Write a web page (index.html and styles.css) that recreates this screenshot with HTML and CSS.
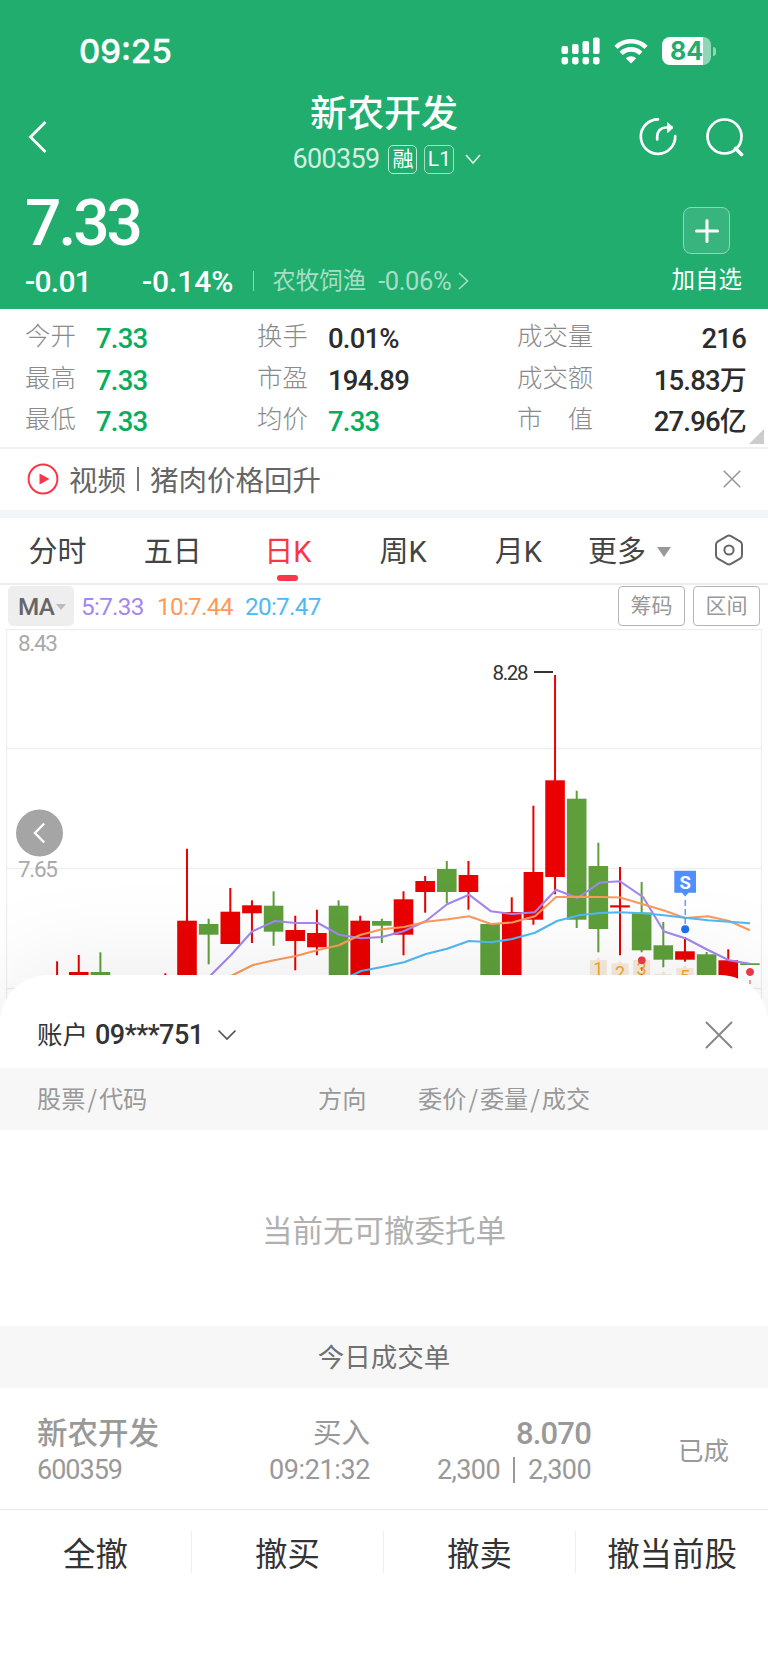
FILE: index.html
```html
<!DOCTYPE html>
<html lang="zh-CN">
<head>
    <meta charset="UTF-8">
    <meta name="viewport" content="width=device-width, initial-scale=1.0">
    <title>新农开发 600359</title>
    <link rel="stylesheet" href="styles.css">
</head>
<body>
    <header class="header">
        <div class="status-bar">
            <span class="time">09:25</span>
            <div class="status-icons">
                <svg width="40" height="28" viewBox="0 0 40 28" fill="#fff">
                    <rect x="0.5" y="9" width="6.6" height="8" rx="2"/>
                    <rect x="11" y="7" width="6.6" height="10" rx="2"/>
                    <rect x="21.5" y="4" width="6.6" height="13" rx="2"/>
                    <rect x="32" y="0.5" width="6.6" height="16.5" rx="2"/>
                    <rect x="0.5" y="20" width="6.6" height="7.5" rx="2.4"/>
                    <rect x="11" y="20" width="6.6" height="7.5" rx="2.4"/>
                    <rect x="21.5" y="20" width="6.6" height="7.5" rx="2.4"/>
                    <rect x="32" y="20" width="6.6" height="7.5" rx="2.4"/>
                </svg>
                <svg class="wifi" width="34" height="25" viewBox="0 0 34 25" fill="none" stroke="#fff" stroke-width="4.6">
                    <path d="M2 8.3a21.6 21.6 0 0 1 30 0"/>
                    <path d="M7.2 14.4a14 14 0 0 1 19.6 0"/>
                    <path d="M17 24.6l-5.2-5.3a7.4 7.4 0 0 1 10.4 0z" fill="#fff" stroke="none"/>
                </svg>
                <div class="battery"><span>84</span></div>
                <i class="battery-tip"></i>
            </div>
        </div>

        <div class="nav-bar">
            <svg class="back" width="20" height="34" viewBox="0 0 20 34" fill="none" stroke="#fff" stroke-width="2.8">
                <path d="M17.5 2L2.5 17l15 15"/>
            </svg>
            <div class="stock-title">
                <h1>新农开发</h1>
                <div class="stock-code">
                    <span class="code">600359</span>
                    <span class="tag">融</span>
                    <span class="tag tag-level">L1</span>
                    <svg width="16" height="11" viewBox="0 0 16 11" fill="none" stroke="#d3efe2" stroke-width="1.8">
                        <path d="M1 1l7 8 7-8"/>
                    </svg>
                </div>
            </div>
            <div class="nav-icons">
                <svg width="38" height="40" viewBox="0 0 38 40" fill="none" stroke="#fff" stroke-width="2.7" stroke-linecap="round">
                    <path d="M19 2.4A17.2 17.2 0 1 0 36.2 19"/>
                    <path d="M18.2 22.5v-3.5a8.5 8.5 0 0 1 8.5-8.5h6"/>
                    <path d="M29 6l5 4.6-5 4.6z" fill="#fff" stroke-width="1"/>
                </svg>
                <svg width="38" height="40" viewBox="0 0 38 40" fill="none" stroke="#fff" stroke-width="2.7">
                    <circle cx="18.5" cy="19.5" r="17"/>
                    <path d="M29.5 31.5l6 6" stroke-width="3.6" stroke-linecap="round"/>
                </svg>
            </div>
        </div>

        <div class="quote">
            <div>
                <div class="price">7.33</div>
                <div class="change">
                    <span class="change-value">-0.01</span>
                    <span class="change-rate">-0.14%</span>
                    <i class="divider"></i>
                    <span class="industry">农牧饲渔</span>
                    <span class="industry-rate">-0.06%</span>
                    <svg width="11" height="18" viewBox="0 0 11 18" fill="none" stroke="#a6dec5" stroke-width="1.6">
                        <path d="M1 1l8.5 8L1 17"/>
                    </svg>
                </div>
            </div>
            <div class="add-stock">
                <div class="add-box">
                    <svg width="24" height="24" viewBox="0 0 24 24" stroke="#fff" stroke-width="3" stroke-linecap="round">
                        <path d="M12 1.5v21M1.5 12h21"/>
                    </svg>
                </div>
                <span>加自选</span>
            </div>
        </div>
    </header>

    <section class="stats">
        <dl>
            <dt>今开</dt><dd class="down">7.33</dd>
            <dt>最高</dt><dd class="down">7.33</dd>
            <dt>最低</dt><dd class="down">7.33</dd>
        </dl>
        <dl>
            <dt>换手</dt><dd>0.01%</dd>
            <dt>市盈</dt><dd>194.89</dd>
            <dt>均价</dt><dd class="down">7.33</dd>
        </dl>
        <dl class="right">
            <dt>成交量</dt><dd>216</dd>
            <dt>成交额</dt><dd>15.83<b>万</b></dd>
            <dt>市　值</dt><dd>27.96<b>亿</b></dd>
        </dl>
        <i class="corner"></i>
    </section>

    <section class="notice">
        <svg width="32" height="32" viewBox="0 0 32 32">
            <circle cx="16" cy="16" r="14.4" fill="none" stroke="#fc3648" stroke-width="2"/>
            <path d="M12.5 10.5v11l10-5.5z" fill="#fc3648"/>
        </svg>
        <span class="notice-text">视频<i></i>猪肉价格回升</span>
        <svg width="18" height="18" viewBox="0 0 18 18" stroke="#999" stroke-width="1.6">
            <path d="M.7.7l16.6 16.6M17.3.7L.7 17.3"/>
        </svg>
    </section>

    <nav class="tabs">
        <span>分时</span>
        <span>五日</span>
        <span class="active">日K</span>
        <span>周K</span>
        <span>月K</span>
        <span class="more">更多<i class="triangle"></i></span>
        <svg width="30" height="32" viewBox="0 0 30 32" fill="none" stroke="#666" stroke-width="2">
            <path d="M13 2.1q2-1.1 4 0l9 5.2q2 1.2 2 3.4v10.6q0 2.2-2 3.4l-9 5.2q-2 1.1-4 0l-9-5.2q-2-1.2-2-3.4V10.7q0-2.2 2-3.4z"/>
            <circle cx="15" cy="16" r="4.6"/>
        </svg>
    </nav>

    <div class="indicators">
        <span class="ma-select">MA<i class="triangle"></i></span>
        <span class="ma5">5:7.33</span>
        <span class="ma10">10:7.44</span>
        <span class="ma20">20:7.47</span>
        <span class="btn-outline">筹码</span>
        <span class="btn-outline">区间</span>
    </div>

    <div class="chart">
        <svg width="768" height="400" viewBox="0 629 768 400">
            <g stroke="#eee" stroke-width="1.3" fill="none">
                <path d="M6.5 1029V629.5h755V1029M6.5 748.5h755M6.5 868.5h755M6.5 988.5h755"/>
            </g>
            <g id="signals"></g>
            <g id="candles"></g>
            <g fill="none" stroke-width="2.1" stroke-linejoin="round">
                <polyline stroke="#a387f0" points="205,982 212,974 231,955 252,931.5 275,921 295.5,923 318,923 339,934.7 361,938.3 382,937 403.5,931.3 426,921 447,904.3 469,894.7 491,911.3 512,914 534.7,912.3 556,889.7 577.5,898 600,882.5 620,881.3 643,897 664,931.5 686,938.5 707,949.5 729,960.3 750,963.7"/>
                <polyline stroke="#fb9a5b" points="215,984 235,974 253,965 274,960.3 296,956 318,950 339,945.3 360,935 382,929.3 404,927 426,921.7 448,919.3 469,916.3 491,924 512,922.5 535,916.3 556,897 577,896.7 600,897 620,897.5 643,904.3 664,910.5 685,918 708,916.3 729,921 750,930.3"/>
                <polyline stroke="#4fb9f5" points="345,978 355,974 361,971 382,967 404,962.3 426,954 447,948.7 469,941 491,942.3 512,939 535,932.7 557,921 579,915.3 600,913 620,912.3 643,913.3 664,915.3 685,917.7 708,920.3 729,921.7 750,923.3"/>
            </g>

            <!-- highest price -->
            <text class="peak" x="492.5" y="679.5" textLength="36">8.28</text>
            <path d="M534 672h19" stroke="#333" stroke-width="2"/>

            <!-- sell mark -->
            <path d="M674.3 870.8h21.7v22h-7.5l-3.3 3.7-3.3-3.7h-7.6z" fill="#4f8fff"/>
            <text class="sell" x="685.2" y="888.5">S</text>
            <path d="M685.2 900v25" stroke="#4f8fff" stroke-width="1.3" stroke-dasharray="6 3"/>
            <circle cx="685.2" cy="929.3" r="4" fill="#1f6ff5"/>

            <!-- buy marks -->
            <g fill="#f0384a" stroke="#f0384a">
                <circle cx="641.8" cy="960.3" r="3.5"/>
                <path d="M641.8 967v12" stroke-dasharray="4 3"/>
                <circle cx="750" cy="972" r="3.5"/>
                <path d="M750 980v8" stroke-dasharray="4 2"/>
            </g>

            <g class="axis">
                <text x="18" y="651" textLength="40">8.43</text>
                <text x="18" y="877" textLength="40">7.65</text>
            </g>
            <circle cx="39.5" cy="833" r="23.5" fill="#a5a5a5"/>
            <path d="M44.2 823.5l-9.2 9.5 9.2 9.5" fill="none" stroke="#fff" stroke-width="2.4"/>
        </svg>
    </div>

    <section class="sheet">
        <div class="account">
            <span class="account-name">账户</span>
            <span class="account-no">09***751</span>
            <svg class="arrow" width="20" height="12" viewBox="0 0 20 12" fill="none" stroke="#555" stroke-width="1.7">
                <path d="M1.5 1.5l8.5 8.5 8.5-8.5"/>
            </svg>
            <svg class="close" width="28" height="28" viewBox="0 0 28 28" stroke="#888" stroke-width="2" stroke-linecap="round">
                <path d="M1.5 1.5l25 25M26.5 1.5l-25 25"/>
            </svg>
        </div>
        <div class="table-head">
            <span>股票<i>/</i>代码</span>
            <span>方向</span>
            <span>委价<i>/</i>委量<i>/</i>成交</span>
        </div>
        <div class="empty">当前无可撤委托单</div>
        <div class="section-title">今日成交单</div>
        <div class="order">
            <div class="order-stock">
                <strong>新农开发</strong>
                <span>600359</span>
            </div>
            <div class="order-side">
                <strong>买入</strong>
                <span>09:21:32</span>
            </div>
            <div class="order-price">
                <strong>8.070</strong>
                <span>2,300<i></i>2,300</span>
            </div>
            <div class="order-state">已成</div>
        </div>
        <div class="actions">
            <button>全撤</button>
            <button>撤买</button>
            <button>撤卖</button>
            <button>撤当前股</button>
        </div>
    </section>

    <script>
        // [slot, up, high, body top, body bottom, low]
        const data = [
            [-6, 1, 961.3, 980, 985, 990],
            [-5, 1, 955, 972, 985, 990],
            [-4, 0, 952.3, 972, 985, 990],
            [-1, 1, 973.3, 980, 985, 990],
            [0, 1, 848.7, 920.7, 985, 985],
            [1, 0, 918.7, 924, 934.7, 964.3],
            [2, 1, 888, 911.7, 944, 944],
            [3, 1, 900.3, 905.3, 913.3, 943],
            [4, 0, 891.3, 905.7, 931.7, 945.7],
            [5, 1, 915.7, 930, 941, 970.3],
            [6, 1, 909.7, 933, 947.3, 955.3],
            [7, 0, 900.3, 905.7, 985, 985],
            [8, 1, 915.7, 920.7, 985, 985],
            [9, 0, 918.7, 921, 925.7, 943],
            [10, 1, 891.3, 899.3, 934.7, 955.3],
            [11, 1, 876, 881, 892, 912.7],
            [12, 0, 861, 869, 892, 903.3],
            [13, 1, 861, 875, 892, 909.7],
            [14, 0, 924, 924, 985, 985],
            [15, 1, 897.3, 912, 985, 985],
            [16, 1, 805.7, 872, 919.7, 924.7],
            [17, 1, 675, 780.3, 877, 894.3],
            [18, 0, 790.7, 798.7, 919.7, 928],
            [19, 0, 842.7, 866, 929, 952.3],
            [20, 1, 867, 905.3, 907.5, 955.3],
            [21, 0, 882, 912.5, 950.3, 952.3],
            [22, 0, 922, 945.3, 959.7, 967.3],
            [23, 1, 937.3, 951.3, 959.7, 961.7],
            [24, 0, 952, 954.3, 985, 985],
            [25, 1, 949.3, 960.3, 985, 985],
            [26, 0, 963.3, 963.3, 965, 965]
        ];
        const step = 21.65;
        const xOf = (i) => 187 + i * step;

        document.getElementById('candles').innerHTML = data.map(([i, up, high, top, bottom, low]) => {
            const color = up ? '#ea0000' : '#5e9f3b';
            return `<path d="M${xOf(i)} ${high}V${low}" stroke="${color}" stroke-width="2"/>
                <rect x="${xOf(i) - 9.8}" y="${top}" width="19.6" height="${bottom - top}" fill="${color}"/>`;
        }).join('');

        // sequence numbers under the candles: [slot, label, top]
        const signals = [[19, '1', 960], [20, '2', 963.5], [21, '3', 960], [22, '4', 974], [23, '5', 968]];
        document.getElementById('signals').innerHTML = signals.map(([i, label, top]) =>
            `<path d="M${xOf(i) - 8.5} ${top}h6l2.5-3 2.5 3h6v20h-17z" fill="#f8ecdf"/>
             <text class="signal" x="${xOf(i)}" y="${top + 15}">${label}</text>`).join('');
    </script>
</body>
</html>
```

FILE: styles.css
```css
* {
    box-sizing: border-box;
}

body {
    width: 768px;
    height: 1663px;
    margin: 0;
    overflow: hidden;
    background-color: #fff;
    color: #333;
    font-family: Roboto, "Noto Sans CJK SC", sans-serif;
}

i {
    font-style: normal;
}

svg {
    display: block;
    flex-shrink: 0;
}

/* header */
.header {
    height: 309px;
    background-color: #21ad6e;
    color: #fff;
}

.status-bar {
    height: 84px;
    padding: 18px 52px 0 79px;
    display: flex;
    justify-content: space-between;
    align-items: center;
}

.time {
    font-family: Inter, sans-serif;
    font-size: 33px;
    font-weight: 500;
    line-height: 40px;
    -webkit-text-stroke: 0.4px #fff;
}

.status-icons {
    display: flex;
    align-items: center;
}

.wifi {
    margin: 0 14px 0 13px;
}

.battery {
    width: 49px;
    height: 28px;
    border-radius: 8px;
    background: linear-gradient(90deg, #fff 84%, #90d6b6 84%);
    color: #21ad6e;
    font-family: Inter, sans-serif;
    font-size: 25px;
    font-weight: 700;
    line-height: 28px;
    text-align: center;
}

.battery-tip {
    width: 3px;
    height: 9px;
    margin-left: 2px;
    border-radius: 0 4px 4px 0;
    background-color: #90d6b6;
}

.nav-bar {
    height: 104px;
    padding: 0 24px 0 28px;
    display: grid;
    grid-template-columns: 150px 1fr 150px;
}

.back {
    margin-top: 36px;
}

.stock-title {
    margin-right: 4px;
    text-align: center;
}

h1 {
    margin: 4px 0 0;
    font-size: 37px;
    font-weight: 500;
    line-height: 54px;
}

.stock-code {
    height: 34px;
    padding-left: 6px;
    display: flex;
    justify-content: center;
    align-items: center;
}

.code {
    color: #d3efe2;
    font-size: 27px;
    letter-spacing: -0.7px;
    margin-right: 9px;
}

.tag {
    width: 29px;
    height: 29px;
    margin-right: 7px;
    border: 1.5px solid #c0e8d6;
    border-radius: 5px;
    font-size: 21px;
    line-height: 26px;
    text-align: center;
}

.tag-level {
    width: 30px;
    margin-right: 11px;
    border: 1px solid #a6dec5;
}

.nav-icons {
    padding-top: 33px;
    display: flex;
    justify-content: flex-end;
    gap: 29px;
}

.quote {
    padding: 0 26px 0 25px;
    display: flex;
    justify-content: space-between;
}

.price {
    height: 72px;
    font-size: 64px;
    font-weight: 500;
    line-height: 72px;
    letter-spacing: -3px;
}

.change {
    height: 42px;
    display: flex;
    align-items: center;
    font-size: 30px;
    font-weight: 500;
    letter-spacing: -0.1px;
}

.change-value {
    width: 117px;
    letter-spacing: -0.7px;
}

.divider {
    width: 1px;
    height: 20px;
    margin: 0 18px 0 20px;
    background-color: #90d6b6;
}

.industry {
    color: #a6dec5;
    font-size: 23.5px;
    font-weight: 400;
    letter-spacing: 0;
    line-height: 38px;
    margin-top: -1px;
}

.industry-rate {
    margin: 0 7px 0 12px;
    color: #a6dec5;
    font-size: 25.5px;
    font-weight: 400;
    letter-spacing: -0.4px;
}

.add-stock {
    padding-top: 19px;
    text-align: center;
    font-size: 23.5px;
}

.add-box {
    width: 47px;
    height: 47px;
    margin: 0 auto 8px;
    border: 1px solid #90d6b6;
    border-radius: 8px;
    background-color: #38b57f;
    display: flex;
    justify-content: center;
    align-items: center;
}

.add-stock span {
    display: block;
    line-height: 37px;
}

/* stats */
.stats {
    position: relative;
    height: 140px;
    padding: 8px 22px 0 25px;
    border-bottom: 2px solid #f0f0f0;
    display: grid;
    grid-template-columns: 232px 260px 1fr;
}

.stats dl {
    margin: 0;
    display: grid;
    grid-template-columns: 71px 1fr;
    grid-auto-rows: 41.5px;
    line-height: 43px;
}

.stats .right {
    grid-template-columns: 90px 1fr;
}

.stats dt {
    color: #8a8a8a;
    font-size: 25.4px;
    font-weight: 300;
    line-height: 39px;
    white-space: nowrap;
}

.stats dd {
    margin: 0;
    color: #2c2c2c;
    font-size: 27.5px;
    font-weight: 500;
    letter-spacing: -0.8px;
}

.stats dd b {
    font-size: 27px;
    font-weight: 500;
}

.stats .right dd {
    text-align: right;
}

.stats .down {
    color: #07ad5c;
}

.corner {
    position: absolute;
    right: 4px;
    bottom: 3px;
    border-left: 15px solid transparent;
    border-bottom: 15px solid #ccc;
}

/* notice */
.notice {
    height: 69px;
    padding: 0 27px 2px;
    border-bottom: 8px solid #f2f5f9;
    display: flex;
    align-items: center;
}

.notice-text {
    flex: 1;
    display: flex;
    align-items: center;
    margin-left: 10px;
    color: #666;
    font-size: 28.5px;
}

.notice-text i {
    width: 2px;
    height: 24px;
    margin: 0 11px;
    background-color: #777;
}

/* tabs */
.tabs {
    height: 67px;
    padding: 0 24px 1px 0;
    border-bottom: 2px solid #ededed;
    display: flex;
    align-items: center;
    color: #444;
    font-size: 29px;
    line-height: 69px;
}

.tabs span {
    width: 115.2px;
    height: 64px;
    text-align: center;
}

.tabs .active {
    position: relative;
    color: #fc3648;
}

.tabs .active::after {
    content: "";
    position: absolute;
    left: 47px;
    bottom: 1px;
    width: 21px;
    height: 6px;
    border-radius: 3px;
    background-color: #fc3648;
}

.tabs .more {
    flex: 1;
    padding-left: 12px;
    text-align: left;
}

.triangle {
    display: inline-block;
    margin-left: 11px;
    border: 7px solid transparent;
    border-top: 10px solid #999;
    border-bottom: 0;
    vertical-align: 5px;
}

/* indicators */
.indicators {
    height: 44px;
    padding: 0 8px 2px;
    display: flex;
    align-items: center;
    font-size: 24.3px;
    letter-spacing: -0.7px;
}

.ma-select {
    width: 66px;
    height: 40px;
    margin-right: 7px;
    padding-left: 10px;
    border-radius: 5px;
    background-color: #eee;
    color: #666;
    font-weight: 500;
    line-height: 41px;
}

.ma-select .triangle {
    margin-left: 2px;
    border-width: 6px 5px 0;
    border-top-color: #bbb;
    vertical-align: 5px;
}

.ma5 {
    width: 76px;
    color: #a387f0;
}

.ma10 {
    width: 88px;
    color: #fb9a5b;
}

.ma20 {
    flex: 1;
    color: #4fb9f5;
}

.btn-outline {
    width: 67px;
    height: 40px;
    margin-left: 8px;
    border: 1.5px solid #b5b5b5;
    border-radius: 4px;
    color: #999;
    font-size: 21px;
    letter-spacing: 0;
    line-height: 39px;
    text-align: center;
}

/* chart */
.chart {
    height: 345.5px;
}

.peak {
    fill: #333;
    font-size: 20.5px;
}

.axis {
    fill: #aaa;
    font-size: 22.5px;
}

.sell {
    fill: #fff;
    font-size: 18.5px;
    font-weight: 700;
    text-anchor: middle;
}

.signal {
    fill: #f5a623;
    font-size: 18px;
    text-anchor: middle;
}

/* bottom sheet */
.sheet {
    position: relative;
    height: 688.5px;
    border-radius: 48px 48px 0 0;
    background-color: #fff;
    box-shadow: 0 0 110px rgba(0, 0, 0, 0.09);
}

.account {
    height: 93.5px;
    padding: 27px 35px 0 37px;
    display: flex;
    align-items: center;
    color: #333;
}

.account-name {
    width: 58px;
    margin-top: -4px;
    font-size: 25.5px;
}

.account-no {
    font-size: 27px;
    font-weight: 500;
    letter-spacing: -0.5px;
}

.arrow {
    margin-left: 13px;
}

.close {
    margin-left: auto;
}

.table-head {
    height: 62px;
    padding-left: 37px;
    background-color: #f7f7f7;
    display: grid;
    grid-template-columns: 281px 100px 1fr;
    color: #999;
    font-family: "Noto Sans CJK SC", sans-serif;
    font-size: 24.2px;
    line-height: 60px;
}

.table-head i {
    margin: 0 2px;
}

.empty {
    height: 196px;
    color: #b0b0b0;
    font-size: 30.5px;
    line-height: 203px;
    text-align: center;
}

.section-title {
    height: 62px;
    background-color: #f7f7f7;
    color: #707070;
    font-size: 26.5px;
    line-height: 64px;
    text-align: center;
}

.order {
    height: 122px;
    padding: 26px 39px 0 37px;
    border-bottom: 1px solid #e8e8e8;
    display: grid;
    grid-template-columns: 140px 193px 221px 1fr;
    color: #999;
    text-align: right;
}

.order strong,
.order span {
    display: block;
    height: 37px;
    line-height: 40px;
}

.order strong {
    font-size: 28.5px;
    font-weight: 500;
}

.order span {
    font-size: 27px;
    line-height: 38px;
    letter-spacing: -0.4px;
}

.order .order-stock {
    text-align: left;
}

.order-stock strong {
    font-size: 30.5px;
}

.order .order-stock span {
    letter-spacing: -1px;
}

.order .order-side strong {
    font-weight: 400;
}

.order-price strong {
    font-size: 31px;
    letter-spacing: -0.8px;
}

.order .order-price span {
    letter-spacing: -0.6px;
}

.order-price i {
    display: inline-block;
    width: 2px;
    height: 26px;
    margin: 0 13px;
    background-color: #999;
    vertical-align: -4px;
}

.order-state {
    font-size: 25.5px;
    line-height: 74px;
}

.actions {
    display: flex;
}

.actions button {
    width: 192px;
    height: 42px;
    margin-top: 21px;
    padding: 3px 0 0;
    border: none;
    border-right: 1px solid #eee;
    background: none;
    color: #333;
    font-family: inherit;
    font-size: 32.4px;
    line-height: 42px;
}

.actions button:last-child {
    border-right: none;
}
```
